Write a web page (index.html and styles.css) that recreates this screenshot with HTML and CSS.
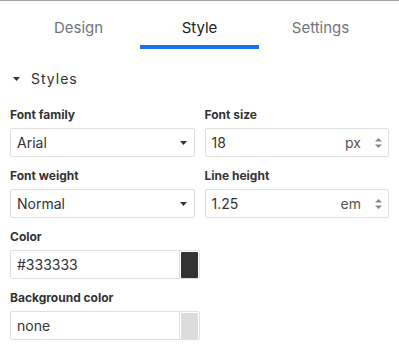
FILE: index.html
```html
<!DOCTYPE html>
<html lang="en">
<head>
  <meta charset="UTF-8">
  <meta name="viewport" content="width=device-width, initial-scale=1.0" />
  <title>Style panel</title>
  <link rel="stylesheet" href="styles.css">
</head>
<body>
  <div class="panel">
    <nav class="tabs">
      <button class="tab">Design</button>
      <button class="tab active">Style</button>
      <button class="tab">Settings</button>
    </nav>

    <section class="group">
      <h2 class="group-title">
        <svg class="caret" width="7" height="4" viewBox="0 0 7 4"><path d="M0 0h7L3.5 4z" fill="#333"/></svg>
        Styles
      </h2>

      <div class="fields">
        <div class="field">
          <label for="fontFamily">Font family</label>
          <div class="box">
            <select id="fontFamily">
              <option>Arial</option>
              <option>Georgia</option>
              <option>Verdana</option>
            </select>
            <svg class="arrow" width="7" height="4" viewBox="0 0 7 4"><path d="M0 0h7L3.5 4z" fill="#333"/></svg>
          </div>
        </div>

        <div class="field">
          <label for="fontSize">Font size</label>
          <div class="box">
            <input type="text" id="fontSize" value="18" />
            <span class="unit">px</span>
            <svg class="spin" width="7" height="10" viewBox="0 0 7 10"><path d="M0 3.5L3.5 0 7 3.5zM0 6.5h7L3.5 10z" fill="#888"/></svg>
          </div>
        </div>

        <div class="field">
          <label for="fontWeight">Font weight</label>
          <div class="box">
            <select id="fontWeight">
              <option>Normal</option>
              <option>Bold</option>
            </select>
            <svg class="arrow" width="7" height="4" viewBox="0 0 7 4"><path d="M0 0h7L3.5 4z" fill="#333"/></svg>
          </div>
        </div>

        <div class="field">
          <label for="lineHeight">Line height</label>
          <div class="box">
            <input type="text" id="lineHeight" value="1.25" />
            <span class="unit">em</span>
            <svg class="spin" width="7" height="10" viewBox="0 0 7 10"><path d="M0 3.5L3.5 0 7 3.5zM0 6.5h7L3.5 10z" fill="#888"/></svg>
          </div>
        </div>

        <div class="field color-field">
          <label for="color">Color</label>
          <div class="box">
            <input type="text" id="color" value="#333333" />
            <span class="swatch-wrap"><span class="swatch dark"></span></span>
          </div>
        </div>

        <div class="field color-field">
          <label for="bgColor">Background color</label>
          <div class="box">
            <input type="text" id="bgColor" value="none" />
            <span class="swatch-wrap"><span class="swatch light"></span></span>
          </div>
        </div>
      </div>
    </section>
  </div>
</body>
</html>
```

FILE: styles.css
```css
:root {
  font-family: Inter, "Noto Sans", sans-serif;
  --accent: #1a73e8;
  --line: #e0e0e0;
  --text: #333;
}
body {
  margin: 0;
  background: #fff;
  color: var(--text);
}
.panel {
  border-top: 1px solid #9ea3a9;
}
.tabs {
  display: flex;
  padding: 0 18px;
}
.tab {
  flex: 1;
  margin: 0 1px;
  padding: 17px 0 7px;
  border: none;
  border-bottom: 4px solid transparent;
  background: none;
  font: inherit;
  font-size: 15px;
  line-height: 20px;
  color: #70757a;
  cursor: pointer;
}
.tab.active {
  color: #202124;
  border-bottom-color: var(--accent);
}
.group {
  padding: 0 10px;
}
.group-title {
  display: flex;
  align-items: center;
  gap: 11px;
  margin: 20px 0 18px;
  padding-left: 3px;
  font-size: 14px;
  line-height: 20px;
  font-weight: 400;
  letter-spacing: 1px;
  color: var(--text);
}
.fields {
  display: grid;
  grid-template-columns: minmax(0, 1fr) minmax(0, 1fr);
  column-gap: 10px;
  row-gap: 11px;
}
.field {
  display: flex;
  flex-direction: column;
  min-width: 0;
}
.color-field {
  grid-column: 1 / -1;
  width: 190px;
}
label {
  font-size: 12px;
  line-height: 16px;
  font-weight: 700;
  color: #333;
  margin-bottom: 5px;
}
.box {
  display: flex;
  align-items: center;
  height: 29px;
  box-sizing: border-box;
  border: 1px solid var(--line);
  border-radius: 2px;
  background: #fff;
}
.box select,
.box input {
  flex: 1;
  width: 0;
  min-width: 0;
  height: 100%;
  padding: 0 6px;
  border: none;
  outline: none;
  background: none;
  font: inherit;
  font-size: 14px;
  color: var(--text);
  appearance: none;
}
.arrow {
  margin-right: 7px;
}
.unit {
  font-size: 14px;
  color: #555;
  margin-right: 14px;
}
.spin {
  margin-right: 6px;
}
.swatch-wrap {
  display: flex;
  align-self: stretch;
  padding: 1px 1px 0 1px;
  border-left: 1px solid var(--line);
}
.swatch {
  width: 17px;
  border-radius: 1px;
}
.swatch.dark {
  background: #333;
}
.swatch.light {
  background: #dcdcdc;
}
```
